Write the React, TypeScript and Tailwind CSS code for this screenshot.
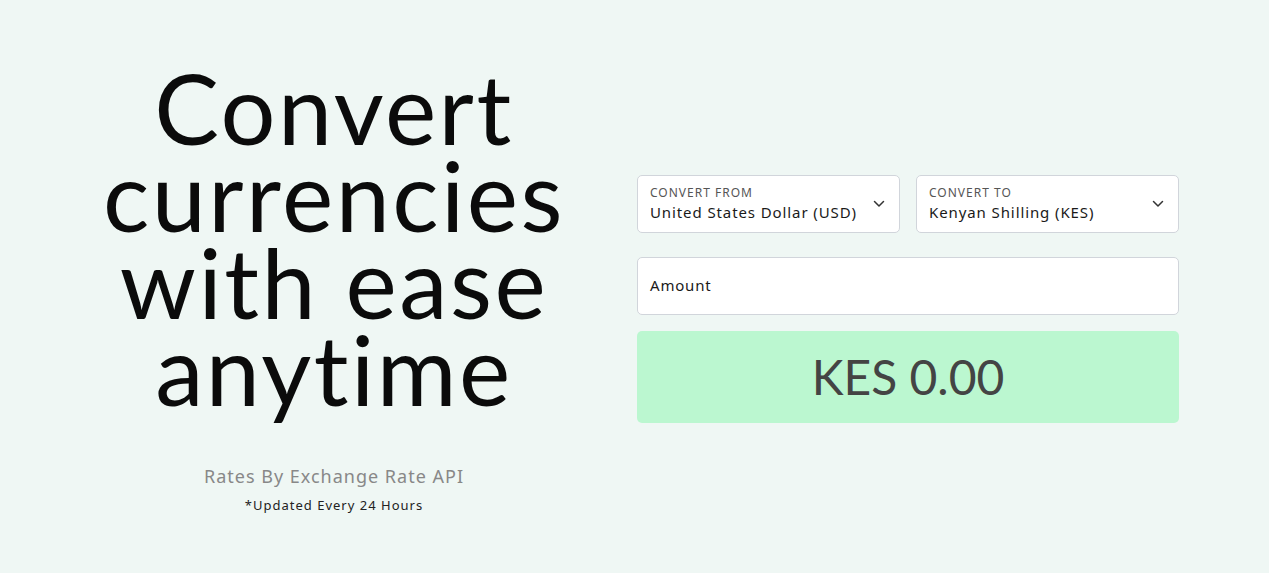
import React from "react";

function Chevron() {
  return (
    <svg width="12" height="8" viewBox="0 0 12 8" fill="none" className="shrink-0">
      <path d="M1.5 1.5L6 6L10.5 1.5" stroke="#333" strokeWidth="1.5" strokeLinecap="round" strokeLinejoin="round" />
    </svg>
  );
}

function Select({ label, value }: { label: string; value: string }) {
  return (
    <div className="flex h-[58px] w-[263px] items-center justify-between rounded-[5px] border border-[#d1d5db] bg-white pl-[12px] pr-[14px]">
      <div className="flex flex-col">
        <span className="text-[12px] leading-[16px] tracking-[1px] text-[#555] uppercase">{label}</span>
        <span className="mt-[1px] text-[15px] leading-[20px] tracking-[0.9px] text-[#1a1a1a]">{value}</span>
      </div>
      <Chevron />
    </div>
  );
}

export default function App() {
  return (
    <div
      className="flex h-[573px] w-full items-center bg-[#eff7f4]"
      style={{ fontFamily: "'Noto Sans', sans-serif" }}
    >
      <div className="ml-[90px] mt-[4px] flex w-[488px] flex-col items-center">
        <h1
          className="text-center text-[97px] leading-[87px] font-normal tracking-[2.5px] text-[#0b0b0b] [font-variant-ligatures:none]"
          style={{ fontFamily: "Lato, sans-serif" }}
        >
          Convert currencies with ease anytime
        </h1>
        <p className="mt-[52px] text-[18px] leading-[24px] tracking-[1px] text-[#888]">Rates By Exchange Rate API</p>
        <p className="mt-[8px] text-[13px] leading-[18px] tracking-[1px] text-[#222]">*Updated Every 24 Hours</p>
      </div>
      <div className="ml-[59px] mt-[24px] flex w-[542px] flex-col">
        <div className="flex gap-[16px]">
          <Select label="Convert From" value="United States Dollar (USD)" />
          <Select label="Convert To" value="Kenyan Shilling (KES)" />
        </div>
        <div className="mt-[24px] flex h-[58px] items-center rounded-[5px] border border-[#d1d5db] bg-white px-[12px]">
          <span className="text-[15px] tracking-[0.8px] text-[#1a1a1a]">Amount</span>
        </div>
        <div className="mt-[16px] flex h-[92px] items-center justify-center rounded-[5px] bg-[#bbf7d0]">
          <span className="text-[48px] text-[#444] [font-variant-ligatures:none]" style={{ fontFamily: "Lato, sans-serif" }}>KES 0.00</span>
        </div>
      </div>
    </div>
  );
}
